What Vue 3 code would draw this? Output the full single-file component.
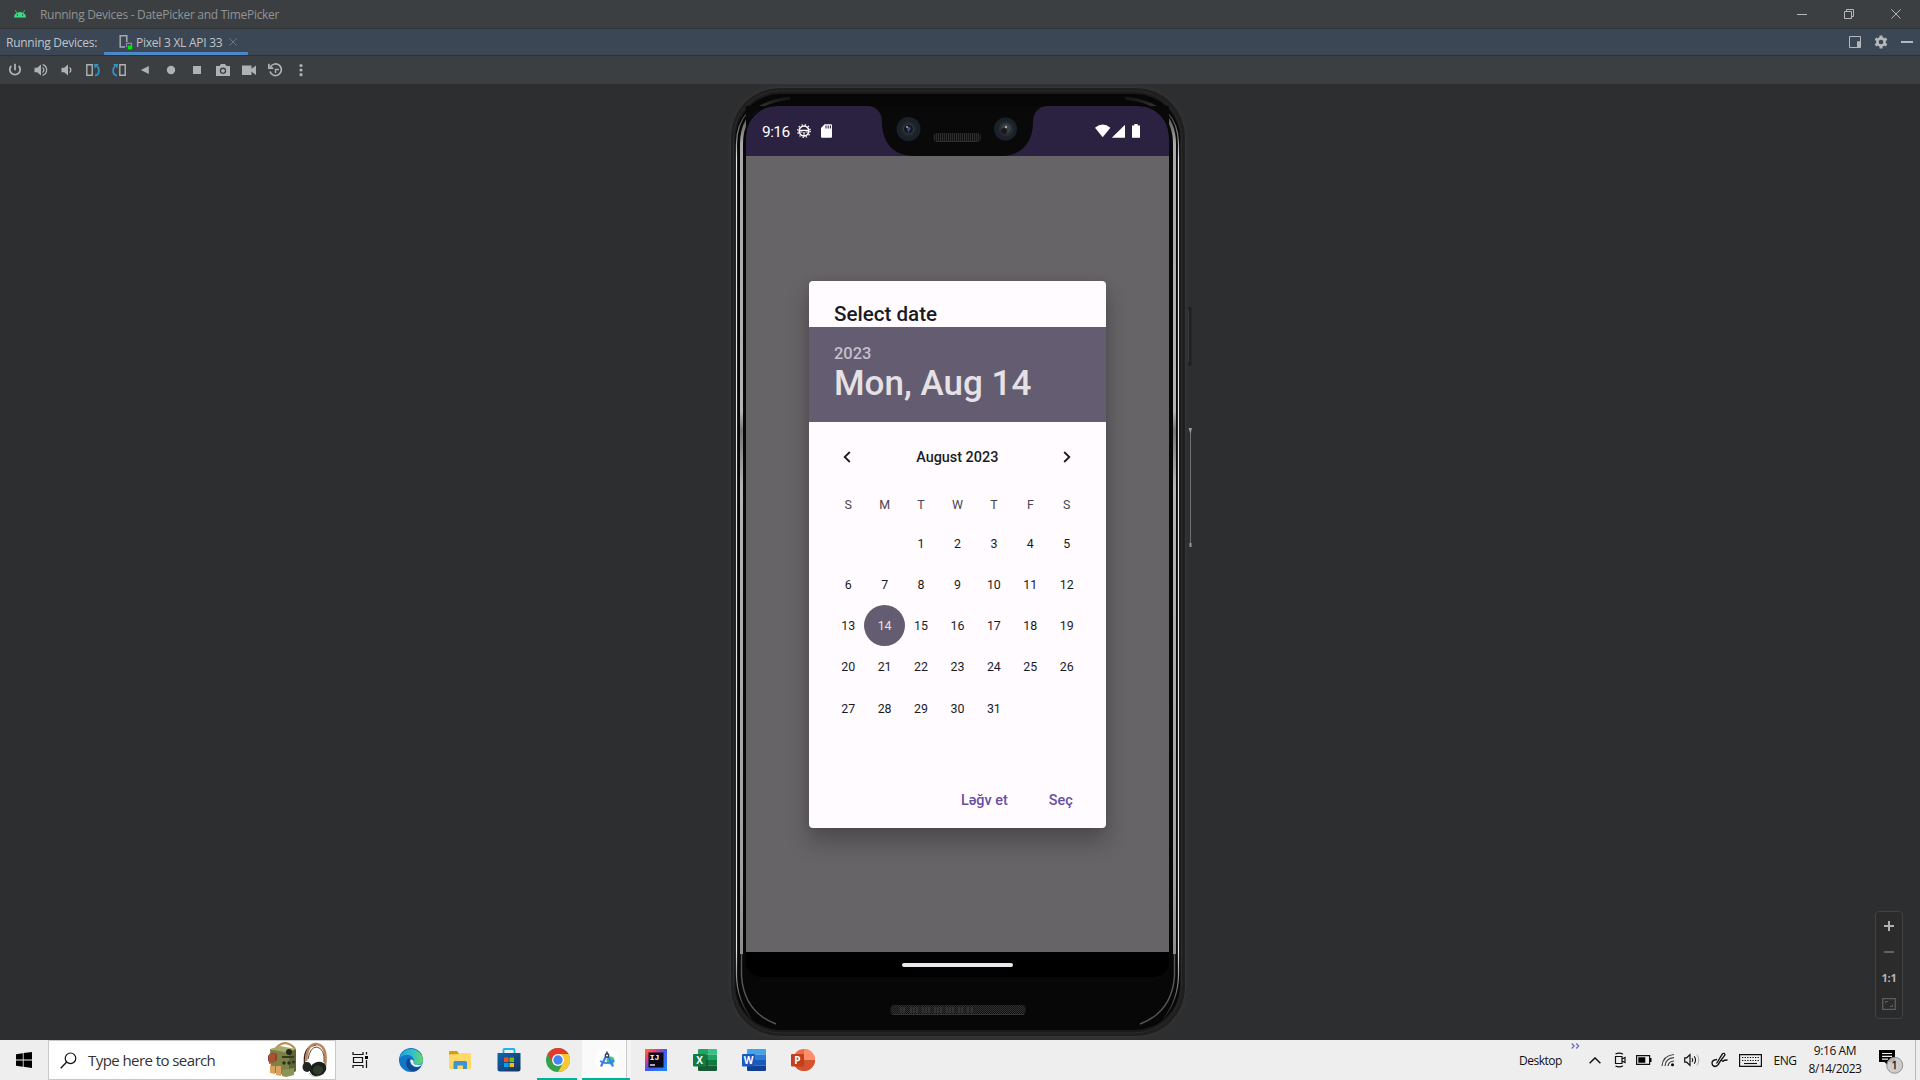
<script setup>
const weekdays = ['S', 'M', 'T', 'W', 'T', 'F', 'S']
const days = [null, null, ...Array.from({ length: 31 }, (_, i) => i + 1)]
const selected = 14
</script>

<template>
  <div class="desktop">
    <header class="titlebar">
      <svg class="android" width="14" height="10" viewBox="0 0 14 10">
        <path d="M1 8.5a6 5.6 0 0 1 12 0z" fill="#3ddc84" />
        <path d="M3.6 3.6 2.4 1.2M10.4 3.6l1.2-2.4" stroke="#3ddc84" stroke-width=".8" />
        <circle cx="4.4" cy="6" r=".7" fill="#3c3f41" /><circle cx="9.6" cy="6" r=".7" fill="#3c3f41" />
      </svg>
      <span class="wintitle">Running Devices - DatePicker and TimePicker</span>
      <div class="winbtns">
        <svg width="10" height="10" viewBox="0 0 10 10"><path d="M0 5.500h10" stroke="#b4b6b7" /></svg>
        <svg width="10" height="10" viewBox="0 0 10 10"><path d="M.5 2.500h7v7h-7zM2.500 2V.5h7v7H8" fill="none" stroke="#b4b6b7" /></svg>
        <svg width="10" height="10" viewBox="0 0 10 10"><path d="M.3.300l9.400 9.400M9.700.3.3 9.700" stroke="#b4b6b7" /></svg>
      </div>
    </header>

    <div class="tabbar">
      <span class="tablabel">Running Devices:</span>
      <div class="tab">
        <svg width="14" height="16" viewBox="0 0 14 16">
          <path d="M6 13H1.200V1.700h6.600V8" fill="none" stroke="#a5aab0" stroke-width="1.500" />
          <path d="M7.500 13V9.300h5v3" fill="none" stroke="#9a7bbd" stroke-width="1.200" />
          <rect x="8.700" y="11.500" width="4.600" height="4" rx="1" fill="#00e400" />
        </svg>
        <span class="tabname">Pixel 3 XL API 33</span>
        <svg width="8" height="8" viewBox="0 0 8 8"><path d="M.5.500l7 7M7.500.500l-7 7" stroke="#6e7780" /></svg>
      </div>
      <div class="tabtools">
        <svg width="12" height="12" viewBox="0 0 12 12"><path d="M.5.500h11v11H.5z" fill="none" stroke="#b5b8ba" /><path d="M8 5.300h3.500v6.200H8z" fill="#b5b8ba" /></svg>
        <svg width="14" height="14" viewBox="0 0 14 14">
          <circle cx="7" cy="7" r="3.600" fill="none" stroke="#b5b8ba" stroke-width="2.600" />
          <path d="M7 .5v2.500M7 11v2.500M1.400 3.700l2.200 1.300M10.400 9l2.200 1.300M1.400 10.300 3.600 9M10.400 5l2.200-1.300" stroke="#b5b8ba" stroke-width="3" />
        </svg>
        <svg width="12" height="12" viewBox="0 0 12 12"><path d="M0 6h12" stroke="#b5b8ba" stroke-width="2" /></svg>
      </div>
    </div>

    <div class="toolbar">
      <i><svg width="14" height="14" viewBox="0 0 14 14"><path d="M3.300 2.800a5.200 5.200 0 1 0 7.400 0M7 .800v6.400" fill="none" stroke="#afb1b3" stroke-width="1.800" /></svg></i>
      <i><svg width="14" height="14" viewBox="0 0 14 14"><path d="M.5 4.700h2.700L7 1.500v11L3.200 9.300H.5z" fill="#afb1b3" /><path d="M8.500 4.500a3 3 0 0 1 0 5M8.600 1.700a5.500 5.500 0 0 1 0 10.600" fill="none" stroke="#afb1b3" stroke-width="1.300" /></svg></i>
      <i><svg width="14" height="14" viewBox="0 0 14 14"><path d="M1.500 4.700h2.700L8 1.500v11L4.200 9.300H1.500z" fill="#afb1b3" /><path d="M9.500 4.500a3 3 0 0 1 0 5" fill="none" stroke="#afb1b3" stroke-width="1.400" /></svg></i>
      <i><svg width="14" height="14" viewBox="0 0 14 14"><path d="M.8 1.800h5.400v10.400H.8z" fill="none" stroke="#afb1b3" stroke-width="1.400" /><path d="M9 12.700c3.300-.7 4.300-3.200 3.700-6.600-.2-1.200-.8-2-1.700-3" fill="none" stroke="#3592c4" stroke-width="1.700" /><path d="M8 1h5L8.600 5.600z" fill="#3592c4" /></svg></i>
      <i><svg width="14" height="14" viewBox="0 0 14 14"><path d="M7.800 1.800h5.400v10.400H7.800z" fill="none" stroke="#afb1b3" stroke-width="1.400" /><path d="M5 12.700C1.700 12 .7 9.500 1.300 6.100c.2-1.200.8-2 1.700-3" fill="none" stroke="#3592c4" stroke-width="1.700" /><path d="M6 1H1l4.400 4.600z" fill="#3592c4" /></svg></i>
      <i><svg width="14" height="14" viewBox="0 0 14 14"><path d="M10.800 3v8L2.800 7z" fill="#afb1b3" /></svg></i>
      <i><svg width="14" height="14" viewBox="0 0 14 14"><circle cx="7" cy="7" r="4.200" fill="#afb1b3" /></svg></i>
      <i><svg width="14" height="14" viewBox="0 0 14 14"><path d="M3 3h8v8H3z" fill="#afb1b3" /></svg></i>
      <i><svg width="14" height="14" viewBox="0 0 14 14"><path d="M0 3h3.500L5 1h4l1.500 2H14v10H0z" fill="#afb1b3" /><circle cx="7" cy="7.800" r="3.200" fill="#3c3f41" /><circle cx="7" cy="7.800" r="1.900" fill="#afb1b3" /></svg></i>
      <i><svg width="14" height="14" viewBox="0 0 14 14"><path d="M0 2.500h9.500v3.200L14 2.500v9.500L9.500 8.800V12H0z" fill="#afb1b3" /></svg></i>
      <i><svg width="15" height="14" viewBox="0 0 15 14"><path d="M2 8.500A5.800 5.800 0 1 0 2.400 4M.9.8v4.400h4.400" fill="none" stroke="#afb1b3" stroke-width="1.700" /><path d="M7.500 10V6.500h3.400M7.500 6.500v3" fill="none" stroke="#afb1b3" stroke-width="1.400" /></svg></i>
      <i><svg width="14" height="14" viewBox="0 0 14 14"><g fill="#afb1b3"><circle cx="7" cy="2.500" r="1.600" /><circle cx="7" cy="7" r="1.600" /><circle cx="7" cy="11.700" r="1.600" /></g></svg></i>
    </div>

    <main class="stage">
      <div class="phone">
        <svg class="frame" width="480" height="956" viewBox="0 0 480 956">
          <defs>
            <linearGradient id="glint" gradientUnits="userSpaceOnUse" x1="0" y1="20" x2="0" y2="940">
              <stop offset="0" stop-color="#999" stop-opacity=".2" />
              <stop offset=".06" stop-color="#e6e6e6" />
              <stop offset=".92" stop-color="#e6e6e6" />
              <stop offset=".96" stop-color="#aaa" stop-opacity=".7" />
              <stop offset="1" stop-color="#999" stop-opacity="0" />
            </linearGradient>
            <linearGradient id="rim" gradientUnits="userSpaceOnUse" x1="0" y1="12" x2="0" y2="940">
              <stop offset="0" stop-color="#aaa" stop-opacity=".05" />
              <stop offset=".05" stop-color="#a8a8a8" />
              <stop offset=".34" stop-color="#b4b4b4" />
              <stop offset=".36" stop-color="#777" />
              <stop offset=".42" stop-color="#b4b4b4" />
              <stop offset=".85" stop-color="#a0a0a0" />
              <stop offset="1" stop-color="#777" />
            </linearGradient>
            <pattern id="mesh" width="2" height="2" patternUnits="userSpaceOnUse">
              <rect width="2" height="2" fill="#151515" /><path d="M0 0h1v1H0zM1 1h1v1H1z" fill="#2f2f2f" />
            </pattern>
            <pattern id="slots" width="2" height="10" patternUnits="userSpaceOnUse">
              <rect width="2" height="10" fill="#131313" /><path d="M0 0h1v10H0z" fill="#2b2b2b" />
            </pattern>
          </defs>
          <rect x="468" y="223" width="3.500" height="59" rx="1" fill="#1f2020" />
          <path d="M468.500 226v52" stroke="#3a3c3c" />
          <path d="M470.500 346v116" stroke="#707070" />
          <path d="M468.500 344h3.500l-1.500 6zM469.500 459h2v4h-2z" fill="#999" />
          <rect x="8" y=".5" width="460" height="955" rx="52" fill="#303030" />
          <rect x="10.500" y="3.500" width="455" height="949" rx="49" fill="#1f1f1f" stroke="#353535" />
          <rect x="13.500" y="7" width="448" height="942" rx="47" fill="#1b1b1b" stroke="#2b2b2b" />
          <rect x="15.500" y="10" width="444.500" height="936" rx="45" fill="#070707" />
          <path d="M28 28Q16.500 40 16.500 60V890Q16.500 915 31 934M447 28Q458.500 40 458.500 60V890Q458.500 915 444 934" fill="none" stroke="url(#glint)" stroke-width="1.200" />
          <path d="M70 14Q21.500 19 21.500 60V870M405 14Q454.500 19 454.500 60V870" fill="none" stroke="url(#rim)" stroke-width="3" />
          <path d="M21.500 870V892Q24 928 56 940M454.500 870V892Q452 928 420 940" fill="none" stroke="#55555a" stroke-width="1.500" />
          <rect x="170.500" y="921" width="135" height="10" rx="4" fill="url(#mesh)" />
          <path d="M173 930.500h131" stroke="#333" />
          <path d="M181 923v6M184 923v6M191 923v6M194 923v6M197 923v6M203 923v6M206 923v6M209 923v6M215 923v6M218 923v6M221 923v6M227 923v6M230 923v6M233 923v6M239 923v6M242 923v6M248 923v6M252 923v6" stroke="#444" />
        </svg>

        <section class="screen">
          <div class="statusbar">
            <span class="time">9:16</span>
            <svg width="14" height="14" viewBox="0 0 14 14">
              <circle cx="7" cy="7" r="4.900" fill="none" stroke="#fff" stroke-width="1.500" />
              <circle cx="7" cy="7" r="6.300" fill="none" stroke="#fff" stroke-width="1.300" stroke-dasharray="1.300 1.999" />
              <path d="M2 6.300h10M2 8h3.500M8.500 8H12M7 8v4.500" stroke="#fff" stroke-width="1.200" />
            </svg>
            <svg class="sd" width="11" height="14" viewBox="0 0 11 14"><path d="M3.600.3H10q1 0 1 1v11.400q0 1-1 1H1q-1 0-1-1V4z" fill="#fff" /><path d="M5 1.500v3M7.200 1.500v3M9.400 1.500v3" stroke="#2b2141" stroke-width="1.100" /></svg>
            <svg class="signals" width="46" height="14" viewBox="0 0 46 14">
              <path d="M0 3.700Q7.700-2.700 15.400 3.700L7.700 13.300z" fill="#fff" />
              <path d="M30 .7v13H16.800z" fill="#fff" />
              <path d="M39.300 0h3.400v1.500H45v12.200h-8V1.500h2.300z" fill="#fff" />
            </svg>
          </div>

          <div class="appscreen">
            <div class="dialog">
              <h2>Select date</h2>
              <div class="head">
                <span class="year">2023</span>
                <span class="date">Mon, Aug 14</span>
              </div>
              <div class="month">
                <svg width="8" height="12" viewBox="0 0 8 12"><path d="M6.800 1 1.700 6l5.100 5" fill="none" stroke="#1b1b1f" stroke-width="1.800" /></svg>
                <span>August 2023</span>
                <svg width="8" height="12" viewBox="0 0 8 12"><path d="M1.200 1l5.100 5-5.100 5" fill="none" stroke="#1b1b1f" stroke-width="1.800" /></svg>
              </div>
              <div class="grid week"><span v-for="(d, i) in weekdays" :key="i">{{ d }}</span></div>
              <div class="grid days">
                <span v-for="(d, i) in days" :key="i"><b v-if="d === selected">{{ d }}</b><template v-else>{{ d }}</template></span>
              </div>
              <div class="actions"><span class="cancel">Ləğv et</span><span>Seç</span></div>
            </div>
          </div>
          <div class="navbar"><div class="pill"></div></div>
        </section>

        <svg class="notch" width="423" height="51" viewBox="0 0 423 51">
          <path d="M0 0H423V31Q422 0 392 0H302C292 0 287 7 287 16C287 36 276 50 255 50H168C147 50 136 36 136 16C136 7 131 0 121 0H30Q1 0 0 31z" fill="#090909" />
          <rect x="187" y="27" width="48" height="9" rx="4.500" fill="url(#slots)" />
          <path d="M191 35.500h41" stroke="#2d2d2d" />
          <circle cx="162.500" cy="23" r="12" fill="#19212a" /><circle cx="162.500" cy="23" r="8" fill="#23262d" /><circle cx="162.500" cy="23" r="5" fill="#15171c" stroke="#3b3e46" />
          <path d="M161 20l4 2-3 5z" fill="#474e86" /><circle cx="161" cy="21" r="1" fill="#9aa" />
          <circle cx="259.500" cy="23" r="11.500" fill="#19212a" /><circle cx="260" cy="23" r="7.500" fill="#292c2f" /><circle cx="260" cy="22.500" r="5" fill="#3b3e40" />
          <circle cx="258" cy="25" r="3" fill="#181a1d" /><circle cx="260" cy="21" r="1.200" fill="#aab" />
        </svg>
      </div>

      <div class="zoombox">
        <svg width="10" height="10" viewBox="0 0 10 10"><path d="M5 0v10M0 5h10" stroke="#afb1b3" stroke-width="2" /></svg>
        <svg width="10" height="10" viewBox="0 0 10 10"><path d="M0 5h10" stroke="#606163" stroke-width="2" /></svg>
        <span>1:1</span>
        <svg width="14" height="12" viewBox="0 0 14 12"><path d="M.7.700h12.600v10.600H.7z" fill="none" stroke="#5c5d5f" stroke-width="1.300" /><path d="M3.500 5.500v-2H6M10.500 6.500v2H8" fill="none" stroke="#5c5d5f" /></svg>
      </div>
    </main>

    <footer class="taskbar">
      <div class="start"><svg width="16" height="16" viewBox="0 0 16 16"><path d="M0 2.200 6.800 1.200v6.300H0zM7.600 1.100 16 0v7.500H7.600zM0 8.400h6.800v6.300L0 13.800zM7.600 8.400H16V16l-8.400-1.200z" /></svg></div>
      <div class="search">
        <svg width="17" height="17" viewBox="0 0 17 17"><circle cx="10.500" cy="6.300" r="5.300" fill="none" stroke="#111" stroke-width="1.200" /><path d="M6.700 10 .7 16.200" stroke="#111" stroke-width="1.300" /></svg>
        <span>Type here to search</span>
        <svg class="art" width="62" height="36" viewBox="0 0 62 36">
          <path d="M8 8 Q11 2 18 1Q25 2 28 7" fill="none" stroke="#b98a52" stroke-width="2" />
          <path d="M3 7 22 10v24L4 30z" fill="#7d8347" /><path d="M3 7 13 4l16 3-7 4z" fill="#a6ab6b" /><path d="M22 10 29 7v22l-7 5z" fill="#5e6535" />
          <circle cx="22" cy="10" r="3" fill="#20291c" /><path d="M15 14h12v2H15z" fill="#333b22" />
          <g fill="#25331e"><circle cx="17" cy="21" r="1.700" /><circle cx="22" cy="21" r="1.700" /><circle cx="26.500" cy="20" r="1.500" /></g>
          <path d="M1 14q4-6 9-2v6q-5 5-9 1z" fill="#8c4330" /><path d="M2 12 8 11v9l-6 2z" fill="#a65338" />
          <path d="M3 24h5v8l-5-1zM9 24h5v10l-5-1z" fill="#d9a25e" /><path d="M15 28l12-2v7l-8 2-4-1z" fill="#8d9355" />
          <path d="M38 25Q35 4 49 3" fill="none" stroke="#25201e" stroke-width="1.600" /><path d="M39 19Q40 2 49 2Q61 3 58 24" fill="none" stroke="#bd8662" stroke-width="2.600" /><path d="M41 17Q43 5 50 5Q58 7 57 20" fill="none" stroke="#694637" stroke-width="1" />
          <ellipse cx="40" cy="25" rx="4.500" ry="5" fill="#222622" /><ellipse cx="51" cy="27" rx="8.500" ry="7" transform="rotate(-25 51 27)" fill="#1a211b" /><ellipse cx="51" cy="28" rx="5" ry="4.500" fill="#2d3a2c" /><path d="M42 31q4 5 10 3" stroke="#b8b9b0" fill="none" />
        </svg>
      </div>
      <div class="taskview"><svg width="17" height="16" viewBox="0 0 17 16"><path d="M1 0v2.500h10V0M1.500 5.500h9v5h-9zM1 16v-2.500h10V16M14.500 0v2.500M14.500 8v8" fill="none" stroke="#111" stroke-width="1.200" /><path d="M13 4h3v3h-3z" /></svg></div>

      <nav class="apps">
        <i><svg width="24" height="24" viewBox="0 0 24 24">
          <defs><linearGradient id="eg" x1="0" x2="1"><stop offset="0" stop-color="#249fe0" /><stop offset=".6" stop-color="#35c1c6" /><stop offset="1" stop-color="#6fdb52" /></linearGradient></defs>
          <circle cx="12" cy="12" r="12" fill="#1177c8" /><path d="M.3 10.500A12 12 0 0 1 24 12c0 4-4 5.500-7.500 4.500-3-.8-1.600-2-1.600-4C14.900 9 11.500 7 8 7 4 7 1 9 .3 10.500z" fill="url(#eg)" />
          <path d="M8 11.500C5 18 10 23.500 15 23.600c3.500-.6 5.700-3 7.200-5.400-4 2.300-10.500 1-11.200-4.200 0-1.300.5-2.300 1.400-3-2-.8-3.600-.6-4.400.5z" fill="#114a94" /><path d="M11.200 11.500a3.500 3.500 0 0 1 3.600 2.300c-.3 1-.7 1.500.3 2.300 2 1.300 6 1 8 .2-4 5-12 2.500-11.900-4.800z" fill="#eee" />
        </svg></i>
        <i><svg width="22" height="19" viewBox="0 0 22 19"><path d="M0 1q0-1 1-1h7l2 2.500V6H0z" fill="#dc9b0b" /><path d="M0 3.500 10 3l1.500-1H21q1 0 1 1v14q0 1-1 1H1q-1 0-1-1z" fill="#ffd868" /><path d="M4.500 18v-6.500q0-1.500 1.500-1.500h10.500q1.500 0 1.500 1.500V18h-4v-3.500H8.500V18z" fill="#3e93d2" /></svg></i>
        <i><svg width="24" height="24" viewBox="0 0 24 24"><defs><linearGradient id="sg" x1="0" y1="0" x2="1" y2="1"><stop offset="0" stop-color="#0f67b3" /><stop offset="1" stop-color="#17315b" /></linearGradient></defs><path d="M6.500 6V2q0-1 1-1h9q1 0 1 1v4" fill="none" stroke="#1cb2ea" stroke-width="1.800" /><path d="M.5 5h23v16q0 2.500-2.500 2.500H3Q.5 23.500.5 21z" fill="url(#sg)" /><path d="M7 9.500h4.500V14H7z" fill="#f25022" /><path d="M12.500 9.500H17V14h-4.500z" fill="#7fba00" /><path d="M7 15h4.500v4H7z" fill="#00a4ef" /><path d="M12.500 15H17v4h-4.500z" fill="#ffb900" /></svg></i>
        <i class="running"><svg width="24" height="24" viewBox="0 0 24 24"><circle cx="12" cy="12" r="12" fill="#34a14b" /><path d="M1.600 6A12 12 0 0 1 22.400 6L12 12z" fill="#e33b2e" /><path d="M1.600 6 7 15l5-3 0-6h10.400z" fill="#e33b2e" /><path d="M22.400 6A12 12 0 0 1 12 24L17.200 15 17.200 9 12 6z" fill="#fcc934" /><circle cx="12" cy="12" r="6" fill="#fff" /><circle cx="12" cy="12" r="4.700" fill="#4285f4" /></svg></i>
        <i class="active"><svg width="24" height="24" viewBox="0 0 24 24"><circle cx="12" cy="12" r="11.500" fill="#fff" /><circle cx="15.500" cy="12.500" r="4" fill="#38cf83" /><path d="M6 18.500 11.500 7h1L18 18.500" fill="none" stroke="#3f7ceb" stroke-width="2.200" /><path d="M5 13q7 4.500 14-.5" fill="none" stroke="#3f7ceb" stroke-width="1.600" /><circle cx="12" cy="7.500" r="1.700" fill="#fff" stroke="#263e5b" stroke-width="1.400" /><path d="M12 3.500v2.500" stroke="#263e5b" stroke-width="1.500" /></svg></i>
        <i><svg width="22" height="22" viewBox="0 0 22 22"><defs><linearGradient id="ij" x1="0" y1="0" x2="1" y2="1"><stop offset="0" stop-color="#f97a12" /><stop offset=".25" stop-color="#f03c78" /><stop offset=".5" stop-color="#4a55ee" /><stop offset="1" stop-color="#168cfa" /></linearGradient></defs><path d="M0 0h22v22H0z" fill="url(#ij)" /><path d="M3.500 3.500h15v15h-15z" fill="#0c0815" /><path d="M5 16h5" stroke="#fff" stroke-width="1.300" /><text x="4.800" y="11" font-family="Liberation Mono" font-weight="700" font-size="8" fill="#fff">IJ</text></svg></i>
        <i><svg width="24" height="22" viewBox="0 0 24 22"><path d="M6 0h9v5.500H5V1q0-1 1-1z" fill="#21a366" /><path d="M15 0h8q1 0 1 1v4.500h-9z" fill="#33c481" /><path d="M5 5.500h10V11H5z" fill="#107c41" /><path d="M15 5.500h9V11h-9z" fill="#21a366" /><path d="M5 11h10v11H6q-1 0-1-1z" fill="#185c37" /><path d="M15 11h9v5.500h-9z" fill="#107c41" /><path d="M15 16.500h9V21q0 1-1 1h-8z" fill="#185c37" /><rect y="5" width="13" height="12.500" rx="1" fill="#107c41" /><text x="6.500" y="15" text-anchor="middle" font-family="Open Sans" font-weight="700" font-size="10" fill="#fff">X</text></svg></i>
        <i><svg width="24" height="22" viewBox="0 0 24 22"><path d="M5 5.500V1q0-1 1-1h17q1 0 1 1v4.500z" fill="#41a5ee" /><path d="M5 5.500h19V11H5z" fill="#2b7cd3" /><path d="M5 11h19v5.500H5z" fill="#185abd" /><path d="M5 16.500h19V21q0 1-1 1H6q-1 0-1-1z" fill="#123f8f" /><rect y="5" width="13" height="12.500" rx="1" fill="#185abd" /><text x="6.500" y="15" text-anchor="middle" font-family="Open Sans" font-weight="700" font-size="10" fill="#fff">W</text></svg></i>
        <i><svg width="24" height="22" viewBox="0 0 24 22"><circle cx="13" cy="11" r="11" fill="#ed6c47" /><path d="M13 0A11 11 0 0 1 24 11H13z" fill="#ff8f6b" /><path d="M2 11h22A11 11 0 0 1 2 11z" fill="#d35230" /><rect y="5" width="13" height="12.500" rx="1" fill="#c43e1c" /><text x="6.500" y="15" text-anchor="middle" font-family="Open Sans" font-weight="700" font-size="10" fill="#fff">P</text></svg></i>
      </nav>

      <div class="tray">
        <span class="w50 desk">Desktop</span>
        <i class="w13 more"><svg width="9" height="6" viewBox="0 0 9 6"><path d="M.7.500 3.200 3 .7 5.500M5.200.500 7.700 3 5.200 5.500" fill="none" stroke="#6c6cb4" stroke-width="1.200" /></svg></i>
        <i class="w26"><svg width="12" height="7" viewBox="0 0 12 7"><path d="M.6 6.300 6 .9l5.400 5.400" fill="none" stroke="#111" stroke-width="1.400" /></svg></i>
        <i class="w23"><svg width="12" height="16" viewBox="0 0 12 16"><path d="M1.500 4.500h6.500v7H1.500zM8 7l3-1.500v5L8 9M1.500 2Q5 .2 9 2M1.500 14q3.500 1.700 7.500 0" fill="none" stroke="#111" stroke-width="1.200" /></svg></i>
        <i class="w25"><svg width="16" height="10" viewBox="0 0 16 10"><path d="M.6.600h13v8.800H.6z" fill="none" stroke="#111" stroke-width="1.200" /><path d="M2.300 2.300h7v5.400h-7zM14 3h1.500v4H14z" /></svg></i>
        <i class="w24"><svg width="14" height="14" viewBox="0 0 14 14"><path d="M1 13Q2 2.500 13 1.500M4 13Q4.500 5.500 13 4.700M7 13Q7.500 8.500 13 8" fill="none" stroke="#444" stroke-width="1.200" /><circle cx="11.500" cy="11.700" r="1.500" /></svg></i>
        <i class="w24"><svg width="17" height="14" viewBox="0 0 17 14"><path d="M.7 4.800h2L6 1.600v10.800L2.700 9.200h-2z" fill="none" stroke="#111" stroke-width="1.200" /><path d="M8 5q1.500 2 0 4M10.200 3.300q2.700 3.700 0 7.400" fill="none" stroke="#111" stroke-width="1.100" /><path d="M12.800 1.500q4 5.500 0 11" fill="none" stroke="#aaa" /></svg></i>
        <i class="w30"><svg width="17" height="16" viewBox="0 0 17 16"><path d="M5.500 11.500 11.500 1.800q2-1.300 2.500 1L8 11M6 7.500Q1 8 1 11t3 3.500Q7 14 8.500 10.500t2.500-2 1.500.5 4-1" fill="none" stroke="#111" stroke-width="1.300" /></svg></i>
        <i class="w33"><svg width="23" height="13" viewBox="0 0 23 13"><path d="M.6.600h21.800v11.800H.6z" fill="none" stroke="#111" stroke-width="1.200" /><path d="M3 3.500h17M3 6.500h17" stroke="#111" stroke-width="1.200" stroke-dasharray="1.300 1.300" /><path d="M5 9.500h13" stroke="#111" stroke-width="1.100" /></svg></i>
        <span class="w36 eng">ENG</span>
        <div class="clock"><span>9:16 AM</span><span>8/14/2023</span></div>
        <i class="notif"><svg width="25" height="25" viewBox="0 0 25 25"><path d="M0 1h16v12H9v3.500L5.500 13H0z" fill="#000" /><path d="M3 4.500h10M3 7.300h10M3 10.100h6" stroke="#eee" stroke-width="1.200" /><circle cx="15.700" cy="16.300" r="8" fill="#c9c9c9" fill-opacity=".9" stroke="#888" stroke-width=".9" /><text x="15.700" y="20.300" text-anchor="middle" font-family="Open Sans" font-size="11" fill="#111" stroke="#111" stroke-width=".3">1</text></svg></i>
      </div>
    </footer>
  </div>
</template>

<style>
body { background: #2d2e30; overflow: hidden; }
</style>

<style scoped>
.desktop { width: 1920px; height: 1080px; display: flex; flex-direction: column; font-family: "Open Sans", "Noto Sans", sans-serif; }
svg { display: block; flex: none; }
i { font-style: normal; display: flex; align-items: center; justify-content: center; }
span { white-space: nowrap; }

.titlebar { height: 28px; background: #3c3f41; border-bottom: 1px solid #323232; display: flex; align-items: center; padding: 0 19px 0 13px; }
.wintitle { margin-left: 13px; font-size: 12px; color: #919394; letter-spacing: -.29px; line-height: 28px; padding-top: 1px; }
.winbtns { margin-left: auto; display: flex; gap: 37px; }
.tabbar { height: 26px; background: #3c4755; border-bottom: 1px solid #2f3133; display: flex; align-items: center; padding: 0 7px 0 6px; }
.tablabel { font-size: 12px; width: 98px; color: #c0c4c8; letter-spacing: -.27px; padding-top: 1px; }
.tab { box-sizing: border-box; height: 26px; width: 144px; border-bottom: 3px solid #4a88c7; border-radius: 1px; display: flex; align-items: center; padding: 3px 0 0 15px; }
.tabname { font-size: 12px; color: #c0c4c8; margin: 0 7px 0 3px; letter-spacing: -.25px; width: 86px; }
.tabtools { margin-left: auto; display: flex; align-items: center; gap: 13px; }
.toolbar { height: 28px; background: #3c3f41; display: flex; padding-left: 2px; }
.toolbar i { width: 26px; }

.stage { height: 956px; position: relative; background: #2d2e30; }
.phone { position: absolute; left: 720px; top: 0; width: 480px; height: 956px; }
.frame { position: absolute; left: 0; top: 0; }
.notch { position: absolute; left: 26px; top: 22px; }
.screen { position: relative; margin: 22px 0 0 26px; width: 423px; height: 871px; border-radius: 31px 31px 15px 15px; overflow: hidden; display: flex; flex-direction: column; font-family: Roboto, sans-serif; }
.statusbar { height: 50px; background: #2b2141; display: flex; align-items: center; padding: 0 28.500px 0 16px; }
.time { font-size: 15.500px; letter-spacing: -.55px; color: #fff; width: 28px; margin-right: 7px; line-height: 20px; padding-top: 2px; }
.sd { margin-left: 10px; }
.signals { margin-left: auto; }
.appscreen { height: 796px; background: #676468; padding: 125px 0 0 63.400px; box-sizing: border-box; }
.navbar { height: 25px; background: #000; display: flex; justify-content: center; }
.pill { width: 111px; height: 4.500px; margin: 10.500px 0 0; border-radius: 2px; background: #ece7ec; }

.dialog { width: 296.300px; height: 547px; border-radius: 4px; background: #fffbff; color: #1b1b1f; box-shadow: 0 14px 22px 1px rgba(0, 0, 0, .24), 0 0 9px rgba(0, 0, 0, .1); display: flex; flex-direction: column; }
h2 { margin: 0; height: 46px; box-sizing: border-box; padding: 21px 0 0 24.600px; font-size: 20.600px; line-height: 24px; font-weight: 500; }
.head { height: 95px; box-sizing: border-box; background: #645c71; display: flex; flex-direction: column; padding: 17px 24.600px 0; font-weight: 500; }
.year { font-size: 16.500px; line-height: 20px; color: #c5bfcb; }
.date { font-size: 35px; line-height: 42px; color: #e6e1e5; margin-top: -1px; }
.month { height: 70px; display: flex; align-items: center; justify-content: space-between; padding: 0 34.500px 0 34px; font-size: 14.400px; font-weight: 500; }
.grid { display: grid; grid-template-columns: repeat(7, 36.430px); padding-left: 20.600px; text-align: center; font-size: 12.400px; }
.week { height: 24px; line-height: 26px; color: #49454f; }
.days { grid-auto-rows: 41.250px; line-height: 41px; margin-top: 6.600px; }
.days span { display: flex; justify-content: center; }
.days b { flex: none; width: 41px; height: 41px; border-radius: 50%; background: #645c71; color: #e6e1e5; font-weight: 400; }
.actions { margin-top: auto; height: 56px; display: flex; justify-content: flex-end; align-items: center; padding-right: 33px; font-size: 14.400px; font-weight: 500; color: #6750a4; }
.cancel { margin-right: 41px; }

.zoombox { position: absolute; left: 1875px; top: 827px; width: 26px; height: 106px; border: 1px solid #404244; border-radius: 4px; background: #2b2b2b; display: flex; flex-direction: column; align-items: center; }
.zoombox svg:nth-child(1) { margin: 9px 0 16px; }
.zoombox span { color: #b4b6b7; font-size: 11px; font-weight: 700; line-height: 14px; margin: 14px 0 13px; letter-spacing: -.3px; }

.taskbar { height: 40px; background: #eee; display: flex; color: #111; }
.start { width: 48px; display: flex; align-items: center; justify-content: center; }
.search { width: 286px; height: 38px; border: 1px solid #c8c8c8; background: #fff; display: flex; align-items: center; }
.search > svg:first-child { margin-left: 11px; }
.search span { margin-left: 11px; font-size: 15px; color: #333; letter-spacing: -.57px; }
.art { margin: 0 6.500px 0 auto; }
.taskview { width: 49px; display: flex; align-items: center; justify-content: center; }
.apps { display: flex; margin-left: 1px; }
.apps i { width: 49px; position: relative; }
.running::after { content: ""; position: absolute; left: 4px; bottom: 0; width: 40px; height: 2px; background: #00b294; }
.apps .active { background: linear-gradient(90deg, #fafafa 44px, #ccc 44px, #ccc 45px, #f4f4f4 45px); }
.active::after { content: ""; position: absolute; left: 0; bottom: 0; width: 48px; height: 2px; background: #00b294; }
.tray { margin-left: auto; display: flex; align-items: center; height: 40px; margin-right: 4px; border-right: 1px solid #bbb; font-size: 12px; }
.w50 { width: 50px; } .w13 { width: 13px; } .w26 { width: 26px; } .w23 { width: 23px; } .w25 { width: 25px; } .w24 { width: 24px; } .w30 { width: 30px; } .w33 { width: 33px; } .w36 { width: 36px; }
.desk { letter-spacing: -.5px; }
.more { align-self: flex-start; padding-top: 3px; }
.eng { text-align: center; letter-spacing: -.5px; }
.clock { width: 64px; display: flex; flex-direction: column; align-items: center; line-height: 18px; letter-spacing: -.42px; }
.notif { width: 48px; padding: 2px 0 0 1px; box-sizing: border-box; }
</style>
